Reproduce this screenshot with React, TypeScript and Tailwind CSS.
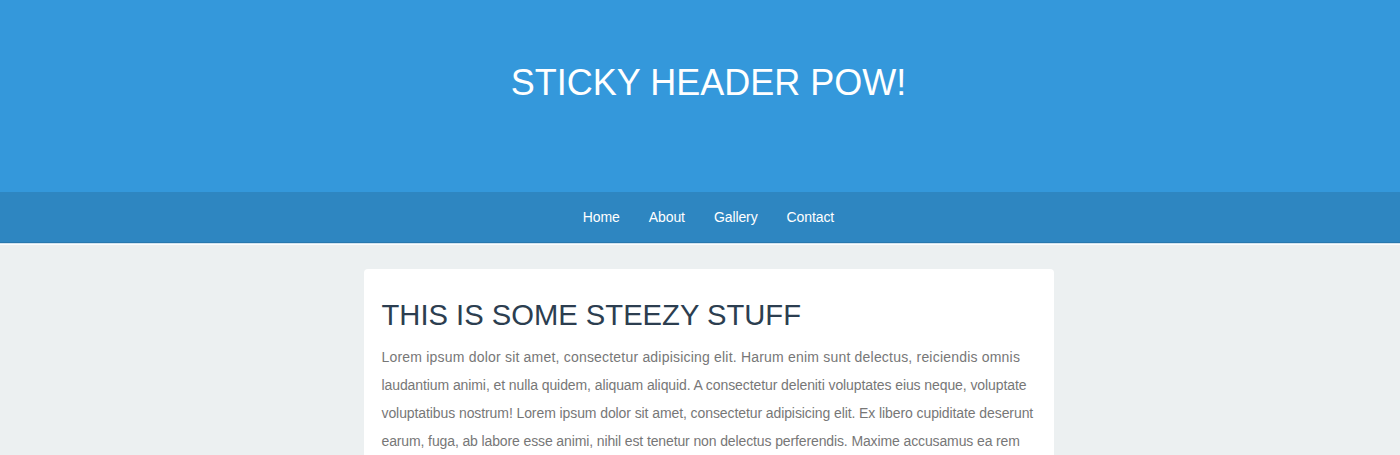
export default function App() {
  const font = { fontFamily: '"Liberation Sans", Arial, sans-serif' };
  return (
    <div className="min-h-[455px] bg-[#ecf0f1]" style={font}>
      <header className="h-[192px] bg-[#3498db] flex items-center justify-center pl-[17px]">
        <h1 className="text-[36px] leading-none text-white font-normal -mt-[26px]">STICKY HEADER POW!</h1>
      </header>
      <nav className="relative h-[51px] bg-[#2e86c1] border-b border-[#2878ae] shadow-[0_1px_0_#d2e3ef,0_2px_0_#fbfdfe] flex items-center justify-center pl-[17px]">
        <ul className="flex">
          <li className="px-[14.5px] text-[14px] text-white tracking-[-0.1px]">Home</li>
          <li className="px-[14.5px] text-[14px] text-white tracking-[-0.1px]">About</li>
          <li className="px-[14.5px] text-[14px] text-white tracking-[-0.1px]">Gallery</li>
          <li className="px-[14.5px] text-[14px] text-white tracking-[-0.1px]">Contact</li>
        </ul>
      </nav>
      <main className="flex justify-center pt-[26px] pl-[17px]">
        <div className="w-[690px] bg-white rounded-[4px] px-[18px] pt-[28px] pb-[20px]">
          <h2 className="text-[29.2px] leading-[36px] text-[#2c3e50] font-normal mb-[10px]">THIS IS SOME STEEZY STUFF</h2>
          <p className="text-[14px] leading-[28px] text-[#777] whitespace-nowrap">
            <span className="block tracking-[0.2px]">Lorem ipsum dolor sit amet, consectetur adipisicing elit. Harum enim sunt delectus, reiciendis omnis</span>
            <span className="block tracking-[-0.09px]">laudantium animi, et nulla quidem, aliquam aliquid. A consectetur deleniti voluptates eius neque, voluptate</span>
            <span className="block tracking-[-0.09px]">voluptatibus nostrum! Lorem ipsum dolor sit amet, consectetur adipisicing elit. Ex libero cupiditate deserunt</span>
            <span className="block tracking-[-0.12px]">earum, fuga, ab labore esse animi, nihil est tenetur non delectus perferendis. Maxime accusamus ea rem</span>
            <span className="block">quisquam, ipsa laboriosam sint at magni deleniti nobis.</span>
          </p>
        </div>
      </main>
    </div>
  );
}
